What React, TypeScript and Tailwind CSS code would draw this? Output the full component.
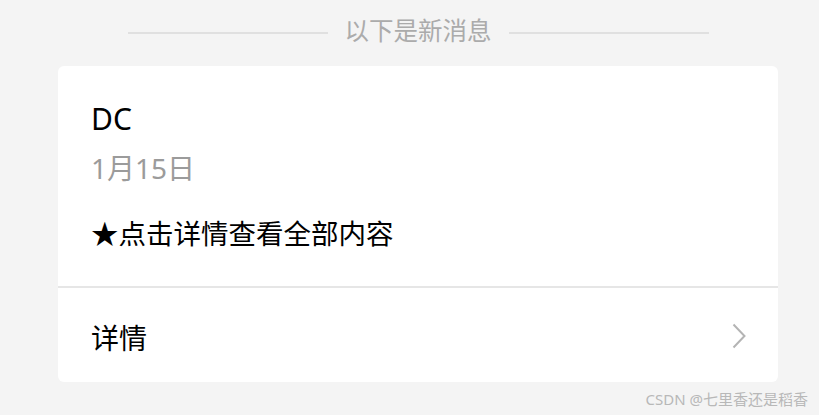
import React from "react";

export default function App() {
  const font = { fontFamily: '"Noto Sans", "Noto Sans CJK SC", sans-serif' };
  return (
    <div className="relative h-[415px] w-[819px] overflow-hidden bg-[#f4f4f4]" style={font}>
      <div className="ml-[58px] w-[720px]">
        <div className="flex h-[66px] items-center justify-center gap-[17px]">
          <div className="h-[2px] w-[200px] bg-[#e0e0e0]" />
          <div className="text-[24.5px] leading-[30px] text-[#ababab] -mt-[4px]">以下是新消息</div>
          <div className="h-[2px] w-[200px] bg-[#e0e0e0]" />
        </div>
        <div className="overflow-hidden rounded-[6px] bg-white">
          <div className="px-[33px] pt-[33px] pb-[32px]">
            <div className="text-[30px] leading-[40px] text-black">DC</div>
            <div className="mt-[9px] text-[28px] leading-[40px] text-[#9b9b9b]">1月15日</div>
            <div className="mt-[26px] text-[27.5px] leading-[40px] text-black">★点击详情查看全部内容</div>
          </div>
          <div className="h-[2px] bg-[#e6e6e6]" />
          <div className="flex h-[94px] items-center justify-between pl-[33px] pr-[32px]">
            <div className="mt-[5px] text-[28px] leading-[40px] text-black">详情</div>
            <svg width="14" height="26" viewBox="0 0 14 26" fill="none" className="mt-[2px]">
              <path d="M1.5 1.5 L12.5 13 L1.5 24.5" stroke="#b4b4b4" strokeWidth="2" />
            </svg>
          </div>
        </div>
      </div>
      <div className="absolute right-[11px] top-[389px] text-[15px] leading-[20px] text-[#b8b8b8]">
        CSDN @七里香还是稻香
      </div>
    </div>
  );
}
